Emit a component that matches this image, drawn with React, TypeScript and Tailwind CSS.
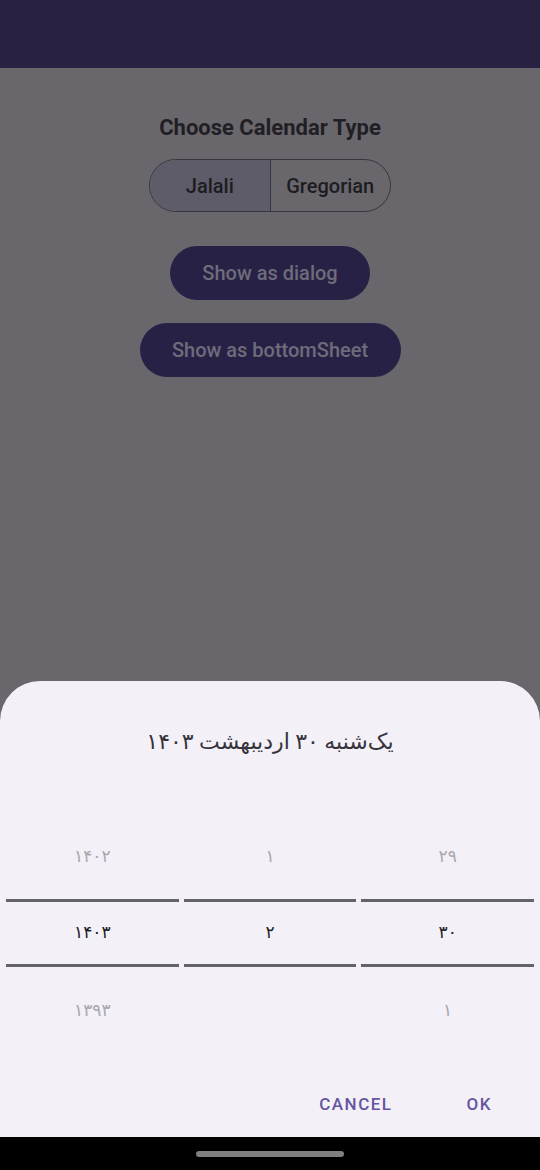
import React from 'react';

const faFont = { fontFamily: "Roboto, 'DejaVu Sans', 'Noto Sans', sans-serif" };

const columns = [
  { prev: '۱۴۰۲', cur: '۱۴۰۳', next: '۱۳۹۳' },
  { prev: '۱', cur: '۲', next: '' },
  { prev: '۲۹', cur: '۳۰', next: '۱' },
];

const App: React.FC = () => {
  return (
    <div className="h-[1170px] w-[540px] flex flex-col bg-[#69676b] font-['Roboto',sans-serif] overflow-hidden">
      {/* App bar (under scrim) */}
      <div className="h-[68px] shrink-0 bg-[#292142]" />

      {/* Page content */}
      <main className="flex-1 flex flex-col items-center pt-[46px]">
        <h1 className="text-[22px] leading-[28px] font-bold text-[#211f25]">Choose Calendar Type</h1>

        <div className="mt-[17px] flex h-[53px] w-[242px] rounded-full border border-[#38363c] overflow-hidden">
          <button className="flex-1 bg-[#5e5c68] border-r border-[#38363c] text-[20px] font-medium text-[#1d1c21]">
            Jalali
          </button>
          <button className="flex-1 text-[20px] font-medium text-[#1d1c21]">Gregorian</button>
        </div>

        <button className="mt-[34px] h-[54px] w-[200px] rounded-full bg-[#282146] text-[20px] font-medium text-[#6f6b7b]">
          Show as dialog
        </button>
        <button className="mt-[23px] h-[54px] w-[261px] rounded-full bg-[#282146] text-[20px] font-medium text-[#6f6b7b]">
          Show as bottomSheet
        </button>
      </main>

      {/* Bottom sheet */}
      <section className="h-[456px] shrink-0 bg-[#f3f0f8] rounded-t-[40px] flex flex-col">
        <div dir="rtl" className="pt-[46px] text-center text-[22px] leading-[30px] text-[#36333b]" style={faFont}>
          یک‌شنبه ۳۰ اردیبهشت ۱۴۰۳
        </div>

        <div className="mt-[61px] flex px-[6px] gap-[5px]">
          {columns.map((c, i) => (
            <div key={i} className="flex-1 flex flex-col text-[17px]" style={faFont}>
              <div className="h-[77px] flex items-center justify-center text-[#aaa7af]">{c.prev}</div>
              <div className="mt-[4px] h-[68px] flex items-center justify-center border-y-[3px] border-[#65636a] text-[#1c1b1f]">
                {c.cur}
              </div>
              <div className="mt-[5px] h-[77px] flex items-center justify-center text-[#aaa7af]">{c.next}</div>
            </div>
          ))}
        </div>

        <div className="mt-[45px] flex justify-end pr-[24px] gap-[26px]">
          <button className="px-6 text-[17px] leading-[20px] font-medium tracking-[1.5px] text-[#65559f]">CANCEL</button>
          <button className="px-6 text-[17px] leading-[20px] font-medium tracking-[1.5px] text-[#65559f]">OK</button>
        </div>
      </section>

      {/* System navigation bar */}
      <div className="h-[33px] shrink-0 bg-black flex items-center justify-center">
        <div className="h-[6px] w-[148px] rounded-full bg-[#7f7f7f]" />
      </div>
    </div>
  );
};

export default App;
